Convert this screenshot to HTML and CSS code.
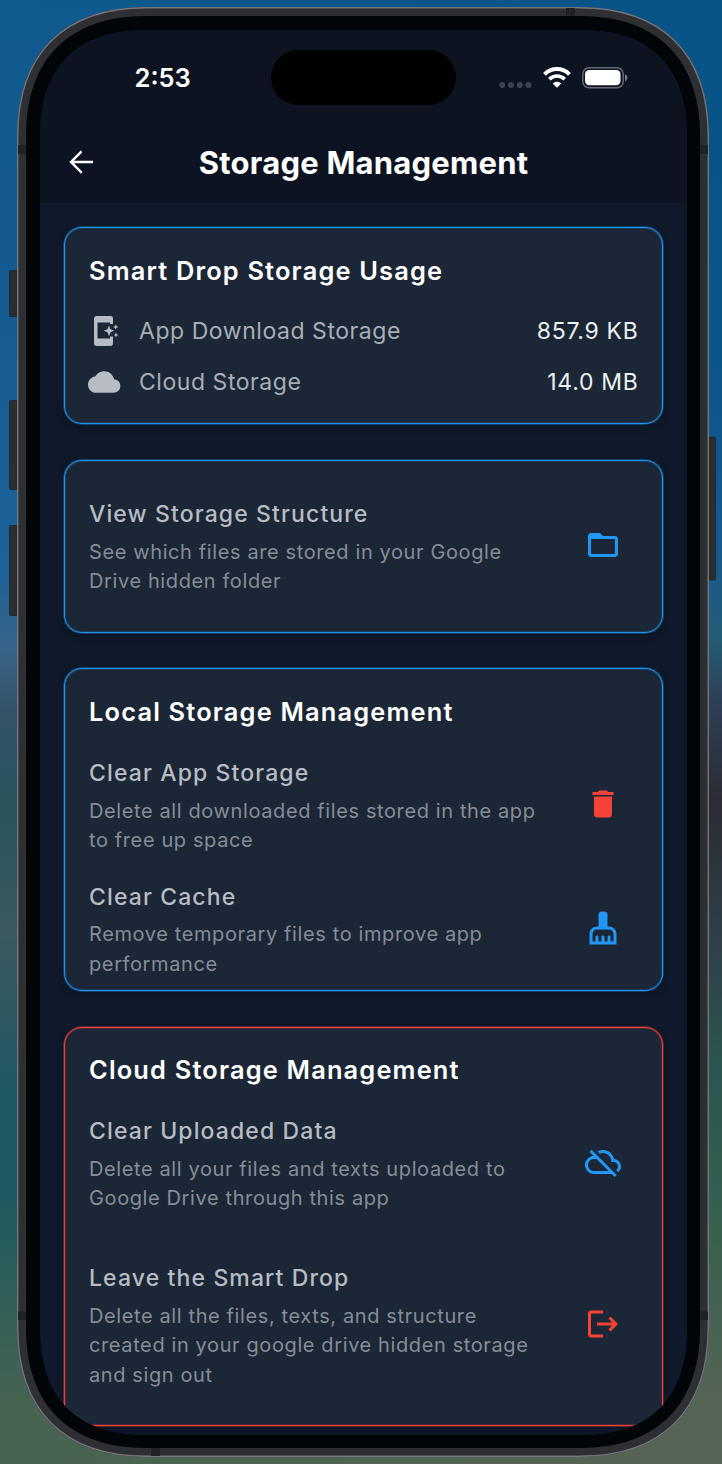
FILE: index.html
```html
<!DOCTYPE html>
<html lang="en">
<head>
<meta charset="utf-8">
<title>Storage Management</title>
<link rel="stylesheet" href="styles.css">
</head>
<body>
<div class="desktop">
  <svg class="frame" width="722" height="1464" viewBox="0 0 722 1464" aria-hidden="true">
    <g fill="#2b2d2e" stroke="#1c2c38" stroke-width="1">
      <rect x="9.500" y="270.500" width="10" height="46" rx="1"/>
      <rect x="9.500" y="400.500" width="10" height="89" rx="1"/>
      <rect x="9.500" y="525.500" width="10" height="90" rx="1"/>
      <rect x="706" y="437" width="9.500" height="143" rx="1"/>
    </g>
    <path d="M17 137C17 53 63 7 147 7H579C663 7 709 53 709 137V1327C709 1411 663 1457 579 1457H147C63 1457 17 1411 17 1327Z" fill="#2d2f32"/>
    <path d="M17.700 137C17.700 53.500 63.500 7.700 147 7.700H579C662.500 7.700 708.300 53.500 708.300 137V1327C708.300 1410.500 662.500 1456.300 579 1456.300H147C63.500 1456.300 17.700 1410.500 17.700 1327Z" fill="none" stroke="#74767b" stroke-width="1.400"/>
    <path d="M18 145h9v9h-9zM700 145h8v9h-8zM18 1311.500h9v8.500h-9zM700 1311.500h8v8.500h-8zM566 8h9v9h-9zM151 1447.500h9v8.500h-9z" fill="#202326"/>
    <path d="M26 136C26 59 69 16 146 16H580C657 16 700 59 700 136V1328C700 1405 657 1448 580 1448H146C69 1448 26 1405 26 1328Z" fill="#020507"/>
  </svg>
  <main class="screen">
    <header class="header">
      <div class="status">
        <span class="time">2:53</span>
        <span class="island"></span>
        <span class="indicators">
          <svg class="signal" width="34" height="6" viewBox="0 0 34 6" fill="#3b4452"><circle cx="3.200" cy="3" r="3"/><circle cx="12" cy="3" r="3"/><circle cx="20.700" cy="3" r="3"/><circle cx="29.500" cy="3" r="3"/></svg>
          <svg class="wifi" width="28" height="21" viewBox="0 0 28 21" fill="none" stroke="#fff"><path d="M1.500 7.300C8.500.300 19.500.300 26.500 7.300" stroke-width="4"/><path d="M6.300 12.200C10.700 7.900 17.300 7.900 21.700 12.200" stroke-width="3.700"/><path d="M14 20.700L9.700 16.400C12.200 14.200 15.800 14.200 18.300 16.400Z" fill="#fff" stroke="none"/></svg>
          <svg class="battery" width="46" height="22" viewBox="0 0 46 22"><rect x=".8" y=".8" width="40.400" height="19.900" rx="6.200" fill="none" stroke="#636974" stroke-width="1.500"/><rect x="3" y="3" width="35.500" height="15.300" rx="4.200" fill="#fff"/><path d="M43 7.300c3.200 1.200 3.200 5.700 0 6.900Z" fill="#747984"/></svg>
        </span>
      </div>
      <div class="navbar">
        <svg class="back" width="36" height="36" viewBox="0 0 24 24" fill="#fff"><path d="M20 11.200H7.300l5.500-5.600L12 4.200 4.200 12l7.800 7.800 1.100-1.200-5.800-5.800H20Z"/></svg>
        <h1>Storage Management</h1>
      </div>
    </header>

    <section class="card usage">
      <h2>Smart Drop Storage Usage</h2>
      <div class="row">
        <svg class="lead" width="36" height="36" viewBox="0 0 36 36" fill="#b8bcc5"><path fill-rule="evenodd" d="M9 3H22.500Q25 3 25 5.500V11H22V9.500H9.500V25.500H22V23.500H25V30Q25 33 22.500 33H9Q6 33 6 30V6Q6 3 9 3Z"/><path d="M21 12.500l1.500 3.800 3.800 1.500-3.800 1.500L21 23.200l-1.500-3.900-3.900-1.500 3.900-1.500ZM27.700 11.200l.8 2 2 .8-2 .8-.8 2-.8-2-2-.8 2-.8ZM28 19.500l.7 1.700 1.700.8-1.700.7-.7 1.700-.7-1.700-1.700-.7 1.700-.8Z"/></svg>
        <span class="name">App Download Storage</span>
        <span class="value">857.9 KB</span>
      </div>
      <div class="row">
        <svg class="lead" width="36" height="36" viewBox="0 0 24 24" fill="#b8bcc5"><path d="M19.350 10.040C18.670 6.590 15.640 4 12 4 9.110 4 6.600 5.640 5.350 8.040 2.340 8.360 0 10.910 0 14c0 3.310 2.690 6 6 6h13c2.760 0 5-2.240 5-5 0-2.640-2.050-4.780-4.650-4.960Z" transform="translate(0 1.150) scale(.9)"/></svg>
        <span class="name">Cloud Storage</span>
        <span class="value">14.0 MB</span>
      </div>
    </section>

    <section class="card structure">
      <div class="item">
        <div class="copy"><h3>View Storage Structure</h3><p>See which files are stored in your Google<br>Drive hidden folder</p></div>
        <svg class="blue" width="36" height="36" viewBox="0 0 24 24"><path d="M20 6h-8l-2-2H4c-1.100 0-2 .9-2 2v12c0 1.100.9 2 2 2h16c1.100 0 2-.9 2-2V8c0-1.100-.9-2-2-2Zm0 12H4V8h16v10Z"/></svg>
      </div>
    </section>

    <section class="card local">
      <h2>Local Storage Management</h2>
      <div class="item">
        <div class="copy"><h3>Clear App Storage</h3><p>Delete all downloaded files stored in the app<br>to free up space</p></div>
        <svg class="red" width="36" height="36" viewBox="0 0 24 24"><path d="M6 19c0 1.100.9 2 2 2h8c1.100 0 2-.9 2-2V7H6v12ZM19 4h-3.500l-1-1h-5l-1 1H5v2h14V4Z"/></svg>
      </div>
      <div class="item">
        <div class="copy"><h3>Clear Cache</h3><p>Remove temporary files to improve app<br>performance</p></div>
        <svg class="blue" width="36" height="36" viewBox="0 0 24 24"><path d="M16 11h-1V3c0-1.100-.9-2-2-2h-2c-1.100 0-2 .9-2 2v8H8c-2.760 0-5 2.240-5 5v7h18v-7c0-2.760-2.240-5-5-5Zm3 10h-2v-3c0-.55-.45-1-1-1s-1 .45-1 1v3h-2v-3c0-.55-.45-1-1-1s-1 .45-1 1v3H9v-3c0-.55-.45-1-1-1s-1 .45-1 1v3H5v-5c0-1.650 1.350-3 3-3h8c1.650 0 3 1.350 3 3v5Z"/></svg>
      </div>
    </section>

    <section class="card cloud">
      <h2>Cloud Storage Management</h2>
      <div class="item">
        <div class="copy"><h3>Clear Uploaded Data</h3><p>Delete all your files and texts uploaded to<br>Google Drive through this app</p></div>
        <svg class="blue" width="36" height="36" viewBox="0 0 24 24"><path d="M24 15c0-2.640-2.050-4.780-4.650-4.960C18.670 6.590 15.640 4 12 4c-1.330 0-2.570.36-3.650.97l1.490 1.490C10.510 6.170 11.230 6 12 6c3.040 0 5.500 2.460 5.500 5.500v.5H19c1.660 0 3 1.340 3 3 0 .99-.48 1.850-1.210 2.400l1.410 1.410C23.290 17.890 24 16.530 24 15ZM4.410 3.860L3 5.270l2.770 2.770h-.42C2.340 8.360 0 10.910 0 14c0 3.310 2.690 6 6 6h11.730l2 2 1.410-1.410L4.410 3.860ZM6 18c-2.210 0-4-1.790-4-4s1.790-4 4-4h1.730l8 8H6Z"/></svg>
      </div>
      <div class="item">
        <div class="copy"><h3>Leave the Smart Drop</h3><p>Delete all the files, texts, and structure<br>created in your google drive hidden storage<br>and sign out</p></div>
        <svg class="red" width="36" height="36" viewBox="0 0 24 24"><path d="M17 7l-1.410 1.410L18.170 11H8v2h10.170l-2.580 2.580L17 17l5-5-5-5ZM4 5h8V3H4c-1.100 0-2 .9-2 2v14c0 1.100.9 2 2 2h8v-2H4V5Z"/></svg>
      </div>
    </section>
  </main>
</div>
</body>
</html>
```
FILE: styles.css
```css
* { box-sizing: border-box; }

body {
  margin: 0;
  font-family: Inter, "Liberation Sans", sans-serif;
  -webkit-font-smoothing: antialiased;
}

.desktop {
  position: relative;
  width: 722px;
  height: 1464px;
  padding: 30px 35px 29px 40px;
  overflow: hidden;
  background:
    linear-gradient(90deg, #0f5a8f, #075387) top / 100% 8px no-repeat,
    linear-gradient(90deg, #486351, #556455) bottom / 100% 8px no-repeat,
    linear-gradient(#0f5a8f 0, #14598f 250px, #1d6299 570px, #386488 650px, #34536a 710px, #28545c 800px, #3b5960 930px, #1f5862 1100px, #20595f 1200px, #2f5f5a 1290px, #486351 1410px) left / 361px 100% no-repeat,
    linear-gradient(#075387 0, #0a558a 350px, #175a92 540px, #235c75 640px, #2e4058 700px, #2c2c34 800px, #30414a 950px, #2b5550 1060px, #36604f 1220px, #556455 1400px) right / 361px 100% no-repeat;
}

.frame { position: absolute; left: 0; top: 0; }

.screen {
  position: relative;
  width: 647px;
  height: 1405px;
  overflow: hidden;
  background: #0f192b;
  clip-path: path("M0 105C0 37 37 0 105 0H542C610 0 647 37 647 105V1300C647 1368 610 1405 542 1405H105C37 1405 0 1368 0 1300Z");
}

.header {
  height: 173px;
  margin-bottom: 24px;
  background: #0d1320;
}

.status {
  display: flex;
  align-items: flex-start;
  height: 100px;
  padding: 20px 50px 0 94.500px;
}

.time {
  width: 136.500px;
  padding-top: 12px;
  color: #fff;
  font-size: 25.5px;
  font-weight: 600;
  line-height: 32px;
}

.island {
  width: 185px;
  height: 55px;
  border-radius: 28px;
  background: #000101;
}

.indicators { display: flex; margin-left: 42.500px; }
.signal { margin-top: 31.500px; }
.wifi { margin: 17px 0 0 10px; }
.battery { margin: 16.500px 0 0 11.500px; }

.navbar {
  display: grid;
  grid-template-columns: 60px 1fr 60px;
  align-items: center;
  height: 66px;
}

.back { margin: -2px 0 0 22.700px; }

h1, h2, h3, p { margin: 0; }

h1 {
  color: #fff;
  font-size: 31px;
  font-weight: 700;
  line-height: 40px;
  letter-spacing: .22px;
  text-align: center;
  white-space: nowrap;
}

.card {
  --edge: 33, 144, 234;
  width: 599px;
  margin: 0 0 35.500px 24px;
  padding: 28px 23.500px 0 24px;
  border: 1px solid rgb(var(--edge));
  border-radius: 18px;
  background: #1b2636;
  box-shadow:
    0 0 0 .7px rgba(var(--edge), .5),
    inset 0 0 0 .7px rgba(var(--edge), .3),
    0 3px 6px rgba(8, 18, 28, .7);
}

.usage { height: 197px; }
.structure { height: 173px; padding-top: 38.500px; }
.local { height: 323px; }
.cloud { --edge: 236, 64, 56; height: 399px; padding-top: 27.500px; }

h2 {
  color: #fff;
  font-size: 25.400px;
  font-weight: 600;
  line-height: 30px;
  letter-spacing: 1.180px;
  white-space: nowrap;
}

.row {
  display: flex;
  align-items: center;
  height: 36px;
  margin-top: 15.500px;
  font-size: 23px;
  letter-spacing: .55px;
  white-space: nowrap;
}

h2 + .row { margin-top: 26.500px; }
.lead { margin-left: -1px; }
.name { margin-left: 15px; color: #a9aeb6; }
.value { margin-left: auto; color: #edf0f3; letter-spacing: .7px; }

.item {
  display: flex;
  justify-content: space-between;
  align-items: center;
  margin-top: 26px;
}

h2 + .item { margin-top: 31.200px; }
.structure .item { margin-top: 0; }
.cloud .item + .item { margin-top: 49.500px; }
.item svg { margin: -5px 17.300px 0 0; flex: none; }

h3 {
  margin-bottom: 7.700px;
  color: #b8bcc2;
  font-size: 23px;
  font-weight: 500;
  line-height: 31px;
  letter-spacing: 1.120px;
  white-space: nowrap;
}

p {
  color: #868d97;
  font-size: 20px;
  line-height: 29.400px;
  letter-spacing: .610px;
  white-space: nowrap;
}

.blue { fill: #2196f3; }
.red { fill: #f44336; }
```
